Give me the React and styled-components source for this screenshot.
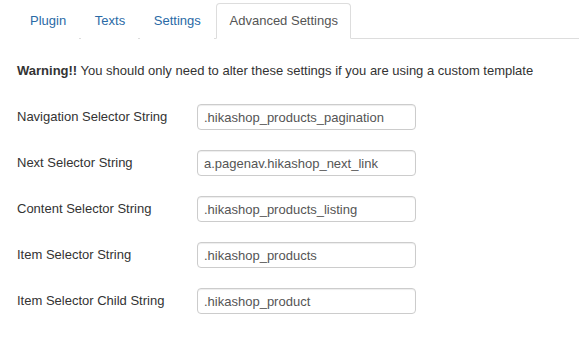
import React from 'react'
import styled, { createGlobalStyle } from 'styled-components'

const Global = createGlobalStyle`
  body {
    margin: 0;
    background: #fff;
    font-family: "Liberation Sans", Arial, sans-serif;
    font-size: 13px;
    line-height: 18px;
    color: #333;
  }
`

const Page = styled.div`
  padding: 3px 0 0 16.5px;
`

const Tabs = styled.ul`
  display: flex;
  margin: 0;
  padding: 0;
  list-style: none;
  border-bottom: 1px solid #ddd;
`

const Tab = styled.li`
  margin: 0 2.2px -1px 0;
  padding: 8px 12px 8px 12.5px;
  line-height: 18px;
  border: 1px solid ${p => (p.$active ? '#ddd' : 'transparent')};
  border-bottom-color: transparent;
  border-radius: 4px 4px 0 0;
  background: #fff;
  color: ${p => (p.$active ? '#555' : '#2a6aa6')};
  cursor: pointer;
`

const Content = styled.div`
  padding: 23px 0 0 0.5px;
`

const Warning = styled.p`
  margin: 0 0 24px;
  strong {
    font-weight: bold;
  }
`

const Form = styled.div`
  display: flex;
  flex-direction: column;
  gap: 20px;
`

const Row = styled.div`
  display: grid;
  grid-template-columns: 180px 219px;
  align-items: center;
`

const Label = styled.label`
  color: #333;
`

const Input = styled.input`
  box-sizing: border-box;
  width: 219px;
  height: 26px;
  padding: 0 6px;
  border: 1px solid #ccc;
  border-radius: 4px;
  box-shadow: inset 0 1px 1px rgba(0, 0, 0, 0.075);
  font-family: "Liberation Sans", Arial, sans-serif;
  font-size: 13px;
  color: #555;
  outline: none;
`

const tabs = ['Plugin', 'Texts', 'Settings', 'Advanced Settings']

const fields = [
  ['Navigation Selector String', '.hikashop_products_pagination'],
  ['Next Selector String', 'a.pagenav.hikashop_next_link'],
  ['Content Selector String', '.hikashop_products_listing'],
  ['Item Selector String', '.hikashop_products'],
  ['Item Selector Child String', '.hikashop_product'],
]

export default function App() {
  return (
    <Page>
      <Global />
      <Tabs>
        {tabs.map(t => (
          <Tab key={t} $active={t === 'Advanced Settings'}>{t}</Tab>
        ))}
      </Tabs>
      <Content>
        <Warning>
          <strong>Warning!!</strong> You should only need to alter these settings if you are using a custom template
        </Warning>
        <Form>
          {fields.map(([label, value]) => (
            <Row key={label}>
              <Label>{label}</Label>
              <Input defaultValue={value} />
            </Row>
          ))}
        </Form>
      </Content>
    </Page>
  )
}
